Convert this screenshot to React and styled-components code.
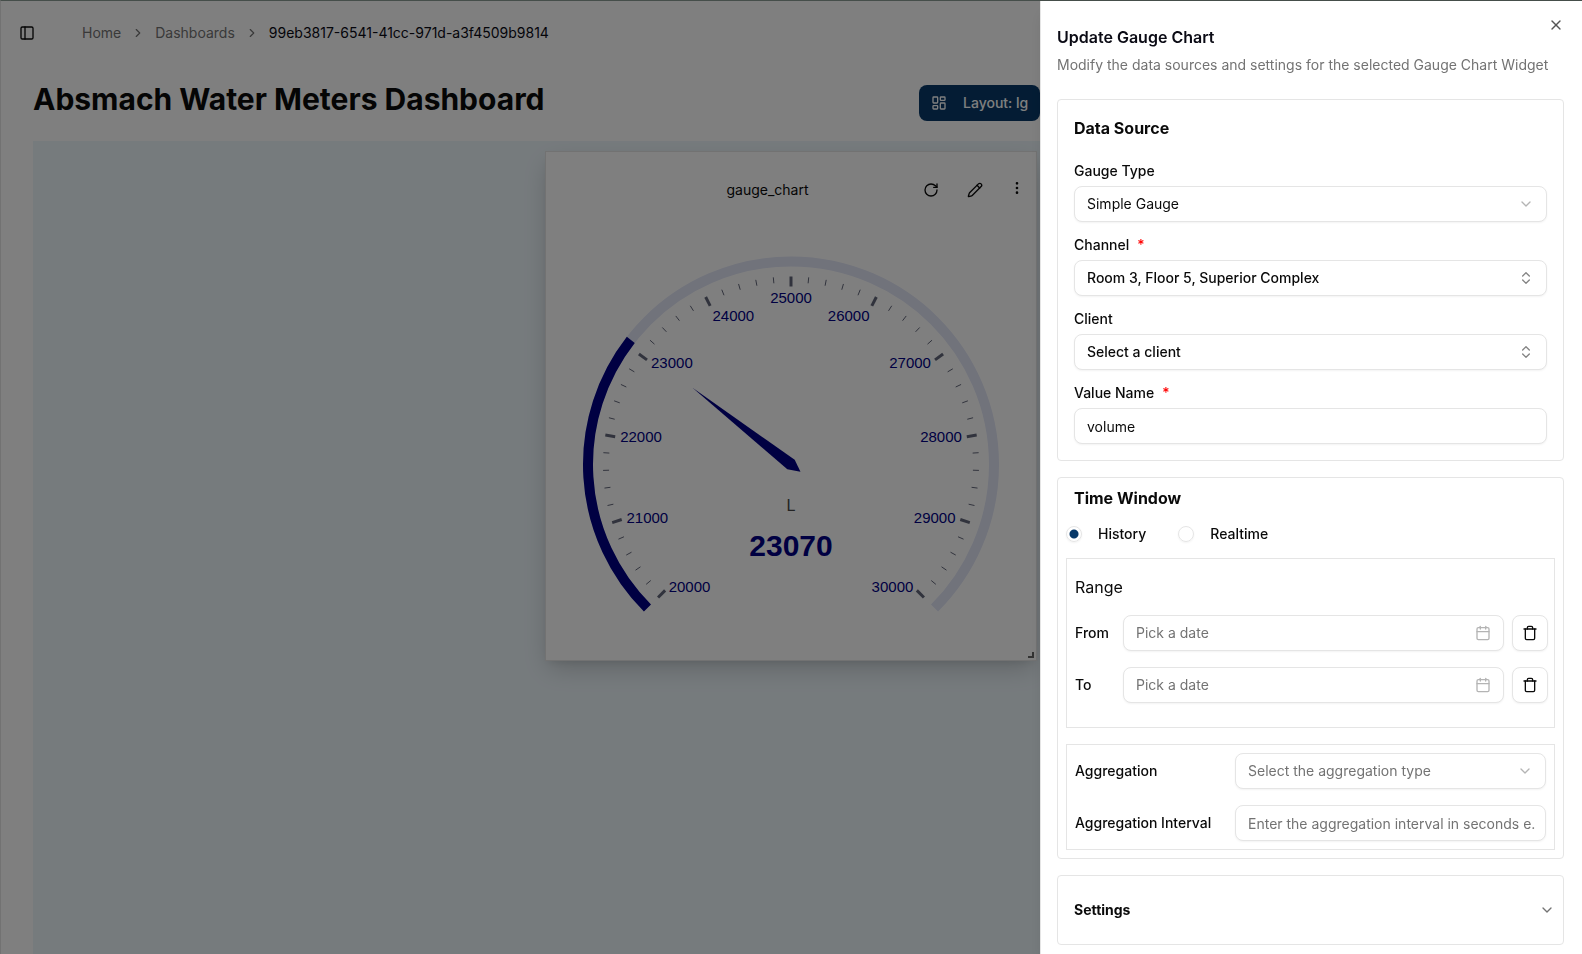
import { useState } from 'react';
import styled, { createGlobalStyle, css } from 'styled-components';
import {
  Calendar,
  ChevronDown,
  ChevronRight,
  ChevronsUpDown,
  EllipsisVertical,
  LayoutDashboard,
  PanelLeft,
  Pencil,
  RotateCw,
  Trash,
  X,
} from 'lucide-react';

const GlobalStyle = createGlobalStyle`
  *, *::before, *::after {
    box-sizing: border-box;
  }
  body {
    margin: 0;
    overflow: hidden;
    font-family: Inter, 'Liberation Sans', sans-serif;
    font-size: 14px;
    line-height: 20px;
    color: #0a0a0a;
  }
  h1, h2, h3, p {
    margin: 0;
  }
  button, input, select {
    font: inherit;
    color: inherit;
  }
`;

const Page = styled.div`
  height: 100vh;
  overflow: hidden;
  display: flex;
  flex-direction: column;
  background: #fff;
  border-top: 1px solid #8a9d94;
  border-left: 1px solid #e5e5e5;
`;

const TopBar = styled.header`
  display: flex;
  align-items: center;
  height: 64px;
  padding: 0 12px;
  gap: 41px;
`;

const IconButton = styled.button`
  display: flex;
  align-items: center;
  justify-content: center;
  width: 28px;
  height: 28px;
  padding: 0;
  border: none;
  background: none;
  cursor: pointer;
`;

const Crumbs = styled.nav`
  display: flex;
  align-items: center;
  gap: 10px;
  color: #737373;
  a {
    color: inherit;
    text-decoration: none;
  }
`;

const CurrentCrumb = styled.span`
  color: #0a0a14;
`;

const Main = styled.main`
  flex: 1;
  display: flex;
  flex-direction: column;
  padding: 16px 32px 0;
`;

const TitleRow = styled.div`
  display: flex;
  align-items: flex-start;
  justify-content: space-between;
  height: 60px;
`;

const Title = styled.h1`
  font-size: 30px;
  line-height: 36px;
  font-weight: 700;
`;

const Actions = styled.div`
  display: flex;
  width: 631px;
  padding-top: 4px;
`;

const LayoutButton = styled.button`
  display: flex;
  align-items: center;
  gap: 16px;
  height: 36px;
  padding: 0 12px;
  border: none;
  border-radius: 8px;
  background: #083969;
  color: #fff;
  font-weight: 500;
`;

const Canvas = styled.section`
  flex: 1;
  display: flex;
  justify-content: flex-end;
  align-items: flex-start;
  padding: 10px 513px 0 0;
  background: #edf6fb;
`;

const Widget = styled.article`
  position: relative;
  width: 492px;
  height: 510px;
  border: 1px solid #e5e5e5;
  background: #fff;
  box-shadow: 0 10px 24px -4px rgba(0, 0, 0, 0.2), 0 4px 8px -4px rgba(0, 0, 0, 0.1);
`;

const WidgetHeader = styled.div`
  display: grid;
  grid-template-columns: 1fr auto;
  align-items: center;
  height: 76px;
  padding-right: 7px;
`;

const WidgetTitle = styled.h2`
  padding-left: 72px;
  font-size: 14px;
  font-weight: 400;
  text-align: center;
`;

const WidgetTools = styled.div`
  display: flex;
  align-items: flex-start;
  gap: 16px;
`;

const MoreButton = styled(IconButton)`
  width: 24px;
  height: 24px;
`;

const GaugeSvg = styled.svg`
  display: block;
  width: 100%;
  height: 420px;
  font-family: 'Liberation Sans', sans-serif;
`;

const ResizeHandle = styled.span`
  position: absolute;
  right: 2px;
  bottom: 2px;
  width: 6px;
  height: 6px;
  border-right: 2px solid #666;
  border-bottom: 2px solid #666;
`;

const Overlay = styled.div`
  position: fixed;
  inset: 0;
  background: rgba(0, 0, 0, 0.5);
`;

const Sheet = styled.aside`
  position: fixed;
  top: 1px;
  right: 0;
  bottom: 0;
  width: 542px;
  padding: 24px 18px 0 16px;
  overflow: hidden;
  border-left: 1px solid #e5e5e5;
  background: #fff;
  box-shadow: 0 10px 15px -3px rgba(0, 0, 0, 0.1), 0 4px 6px -4px rgba(0, 0, 0, 0.1);
`;

const CloseButton = styled(IconButton)`
  position: absolute;
  top: 10px;
  right: 12px;
  color: #555;
`;

const SheetTitle = styled.h2`
  font-size: 16px;
  line-height: 24px;
  font-weight: 600;
  color: #0a0a14;
`;

const SheetText = styled.p`
  padding: 6px 0 24px;
  color: #737373;
`;

const Sections = styled.form`
  display: flex;
  flex-direction: column;
  gap: 16px;
`;

const Panel = styled.section`
  border: 1px solid #e5e5e5;
  border-radius: 4px;
  padding: ${({ $tight }) => ($tight ? '8px' : '16px')};
`;

const PanelTitle = styled.h3`
  font-size: 16px;
  line-height: 24px;
  font-weight: 700;
  ${({ $inset }) =>
    $inset &&
    css`
      padding-left: 8px;
    `}
`;

const Fields = styled.div`
  display: flex;
  flex-direction: column;
  gap: 8px;
  padding-top: 16px;
`;

const Field = styled.div`
  display: flex;
  flex-direction: column;
`;

const Label = styled.label`
  line-height: 30px;
  font-weight: 500;
`;

const Star = styled.span`
  padding-left: 8px;
  color: #f00;
`;

const Control = styled.div`
  display: flex;
  align-items: center;
  flex: 1;
  min-width: 0;
  position: relative;
  > svg {
    position: absolute;
    right: 13px;
    pointer-events: none;
    opacity: ${({ $strong }) => ($strong ? 0.5 : 0.3)};
  }
`;

const box = css`
  width: 100%;
  height: 36px;
  padding: 0 12px;
  border: 1px solid #e5e5e5;
  border-radius: 8px;
  background: #fff;
  box-shadow: 0 1px 2px rgba(0, 0, 0, 0.05);
`;

const Select = styled.select`
  ${box}
  appearance: none;
  font-weight: ${({ $strong }) => ($strong ? 500 : 400)};
  color: ${({ $muted }) => ($muted ? '#737373' : 'inherit')};
`;

const Input = styled.input`
  ${box}
  padding-right: 10px;
  &::placeholder {
    color: #737373;
    opacity: 1;
  }
`;

const DateButton = styled.button`
  ${box}
  text-align: left;
  color: #737373;
`;

const TrashButton = styled.button`
  ${box}
  display: flex;
  align-items: center;
  justify-content: center;
  width: 36px;
  padding: 0;
`;

const Radios = styled.div`
  display: flex;
  gap: 32px;
  height: 48px;
  align-items: center;
`;

const RadioItem = styled.div`
  display: flex;
  align-items: center;
  gap: 16px;
`;

const Radio = styled.input`
  appearance: none;
  width: 16px;
  height: 16px;
  margin: 0;
  border: 1px solid #e5e5e5;
  border-radius: 50%;
  box-shadow: 0 1px 2px rgba(0, 0, 0, 0.05);
  &:checked {
    background: radial-gradient(circle, #083969 0 4px, #fff 5px);
  }
`;

const Group = styled.div`
  display: flex;
  flex-direction: column;
  gap: 16px;
  border: 1px solid #e5e5e5;
  padding: ${({ $range }) => ($range ? '16px 6px 24px 8px' : '8px')};
  margin-bottom: ${({ $range }) => ($range ? '16px' : '0')};
`;

const RangeTitle = styled.h3`
  font-size: 16px;
  line-height: 24px;
  font-weight: 400;
`;

const Row = styled.div`
  display: grid;
  grid-template-columns: 144px 1fr;
  column-gap: 16px;
  align-items: center;
`;

const DateRow = styled(Row)`
  grid-template-columns: 40px 1fr 36px;
  column-gap: 8px;
`;

const SettingsToggle = styled.button`
  display: flex;
  align-items: center;
  justify-content: space-between;
  width: 100%;
  height: 68px;
  padding: 0 8px 0 16px;
  border: none;
  background: none;
  font-weight: 700;
`;

const SettingsPanel = styled(Panel)`
  padding: 0;
`;

const MIN = 20000;
const MAX = 30000;
const R = 208;
const CX = 245;
const CY = 236.5;
const NAVY = '#000084';

const polar = (deg, r) => {
  const a = (deg * Math.PI) / 180;
  return [CX + Math.cos(a) * r, CY - Math.sin(a) * r];
};

const toAngle = (value) => 225 - ((value - MIN) / (MAX - MIN)) * 270;

const arc = (from, to, r) => {
  const [x1, y1] = polar(from, r);
  const [x2, y2] = polar(to, r);
  return `M${x1} ${y1}A${r} ${r} 0 ${from - to > 180 ? 1 : 0} 1 ${x2} ${y2}`;
};

const anchor = (x) => {
  if (x < -0.4) return 'start';
  if (x > 0.4) return 'end';
  return 'middle';
};

const Gauge = ({ value, unit }) => {
  const angle = toAngle(value);
  const ticks = Array.from({ length: 51 }, (_, i) => i);
  const needle = [
    polar(angle + 180, 12),
    polar(angle - 90, 6),
    polar(angle, R * 0.6),
    polar(angle + 90, 6),
  ];

  return (
    <GaugeSvg viewBox="0 0 490 420" role="img" aria-label="gauge_chart">
      <path d={arc(225, -45, R - 5)} fill="none" stroke="#e2e6f7" strokeWidth="10" />
      <path d={arc(225, angle, R - 5)} fill="none" stroke={NAVY} strokeWidth="10" />
      {ticks.map((i) => {
        const major = i % 5 === 0;
        const deg = 225 - i * 5.4;
        const [x1, y1] = polar(deg, R - 20);
        const [x2, y2] = polar(deg, R - (major ? 30 : 26));
        return (
          <line
            key={i}
            x1={x1}
            y1={y1}
            x2={x2}
            y2={y2}
            stroke="#63677a"
            strokeWidth={major ? 3 : 1}
          />
        );
      })}
      {ticks
        .filter((i) => i % 5 === 0)
        .map((i) => {
          const deg = 225 - i * 5.4;
          const [x, y] = polar(deg, R - 35);
          const unitX = (x - CX) / (R - 35);
          const top = (CY - y) / (R - 35) > 0.8;
          return (
            <text
              key={i}
              x={x}
              y={Math.round(y) + (top ? 11 : 5)}
              fontSize="15"
              fill={NAVY}
              textAnchor={anchor(unitX)}
            >
              {MIN + i * 200}
            </text>
          );
        })}
      <polygon points={needle.map((p) => p.join(',')).join(' ')} fill={NAVY} />
      <text x={CX} y="283" fontSize="16" fill="#464646" textAnchor="middle">
        {unit}
      </text>
      <text x={CX} y="328" fontSize="30" fontWeight="700" fill={NAVY} textAnchor="middle">
        {value}
      </text>
    </GaugeSvg>
  );
};

const DateField = ({ id, label }) => (
  <DateRow>
    <Label htmlFor={id}>{label}</Label>
    <Control>
      <DateButton id={id} type="button">
        Pick a date
      </DateButton>
      <Calendar size={16} />
    </Control>
    <TrashButton type="button" aria-label={`Clear ${label}`}>
      <Trash size={16} />
    </TrashButton>
  </DateRow>
);

const App = () => {
  const [mode, setMode] = useState('history');
  const [name, setName] = useState('volume');

  return (
    <>
      <GlobalStyle />
      <Page>
        <TopBar>
          <IconButton aria-label="Toggle sidebar">
            <PanelLeft size={16} />
          </IconButton>
          <Crumbs>
            <a href="#home">Home</a>
            <ChevronRight size={14} />
            <a href="#dashboards">Dashboards</a>
            <ChevronRight size={14} />
            <CurrentCrumb>99eb3817-6541-41cc-971d-a3f4509b9814</CurrentCrumb>
          </Crumbs>
        </TopBar>
        <Main>
          <TitleRow>
            <Title>Absmach Water Meters Dashboard</Title>
            <Actions>
              <LayoutButton>
                <LayoutDashboard size={16} />
                Layout: lg
              </LayoutButton>
            </Actions>
          </TitleRow>
          <Canvas>
            <Widget>
              <WidgetHeader>
                <WidgetTitle>gauge_chart</WidgetTitle>
                <WidgetTools>
                  <IconButton aria-label="Refresh">
                    <RotateCw size={16} />
                  </IconButton>
                  <IconButton aria-label="Edit">
                    <Pencil size={16} />
                  </IconButton>
                  <MoreButton aria-label="More">
                    <EllipsisVertical size={16} />
                  </MoreButton>
                </WidgetTools>
              </WidgetHeader>
              <Gauge value={23070} unit="L" />
              <ResizeHandle />
            </Widget>
          </Canvas>
        </Main>
      </Page>
      <Overlay />
      <Sheet role="dialog" aria-labelledby="sheet-title">
        <CloseButton aria-label="Close">
          <X size={16} />
        </CloseButton>
        <SheetTitle id="sheet-title">Update Gauge Chart</SheetTitle>
        <SheetText>
          Modify the data sources and settings for the selected Gauge Chart Widget
        </SheetText>
        <Sections>
          <Panel>
            <PanelTitle>Data Source</PanelTitle>
            <Fields>
              <Field>
                <Label htmlFor="type">Gauge Type</Label>
                <Control>
                  <Select id="type">
                    <option>Simple Gauge</option>
                  </Select>
                  <ChevronDown size={16} />
                </Control>
              </Field>
              <Field>
                <Label htmlFor="channel">
                  Channel<Star>*</Star>
                </Label>
                <Control $strong>
                  <Select id="channel" $strong>
                    <option>Room 3, Floor 5, Superior Complex</option>
                  </Select>
                  <ChevronsUpDown size={16} />
                </Control>
              </Field>
              <Field>
                <Label htmlFor="client">Client</Label>
                <Control $strong>
                  <Select id="client" $strong>
                    <option>Select a client</option>
                  </Select>
                  <ChevronsUpDown size={16} />
                </Control>
              </Field>
              <Field>
                <Label htmlFor="name">
                  Value Name<Star>*</Star>
                </Label>
                <Input id="name" value={name} onChange={(e) => setName(e.target.value)} />
              </Field>
            </Fields>
          </Panel>
          <Panel $tight>
            <PanelTitle $inset>Time Window</PanelTitle>
            <Radios>
              <RadioItem>
                <Radio
                  type="radio"
                  id="history"
                  name="mode"
                  checked={mode === 'history'}
                  onChange={() => setMode('history')}
                />
                <Label htmlFor="history">History</Label>
              </RadioItem>
              <RadioItem>
                <Radio
                  type="radio"
                  id="realtime"
                  name="mode"
                  checked={mode === 'realtime'}
                  onChange={() => setMode('realtime')}
                />
                <Label htmlFor="realtime">Realtime</Label>
              </RadioItem>
            </Radios>
            <Group $range>
              <RangeTitle>Range</RangeTitle>
              <DateField id="from" label="From" />
              <DateField id="to" label="To" />
            </Group>
            <Group>
              <Row>
                <Label htmlFor="aggregation">Aggregation</Label>
                <Control>
                  <Select id="aggregation" $muted>
                    <option>Select the aggregation type</option>
                  </Select>
                  <ChevronDown size={16} />
                </Control>
              </Row>
              <Row>
                <Label htmlFor="interval">Aggregation Interval</Label>
                <Input
                  id="interval"
                  placeholder="Enter the aggregation interval in seconds e.g. 10"
                />
              </Row>
            </Group>
          </Panel>
          <SettingsPanel>
            <SettingsToggle type="button">
              Settings
              <ChevronDown size={16} color="#737373" />
            </SettingsToggle>
          </SettingsPanel>
        </Sections>
      </Sheet>
    </>
  );
};

export default App;
